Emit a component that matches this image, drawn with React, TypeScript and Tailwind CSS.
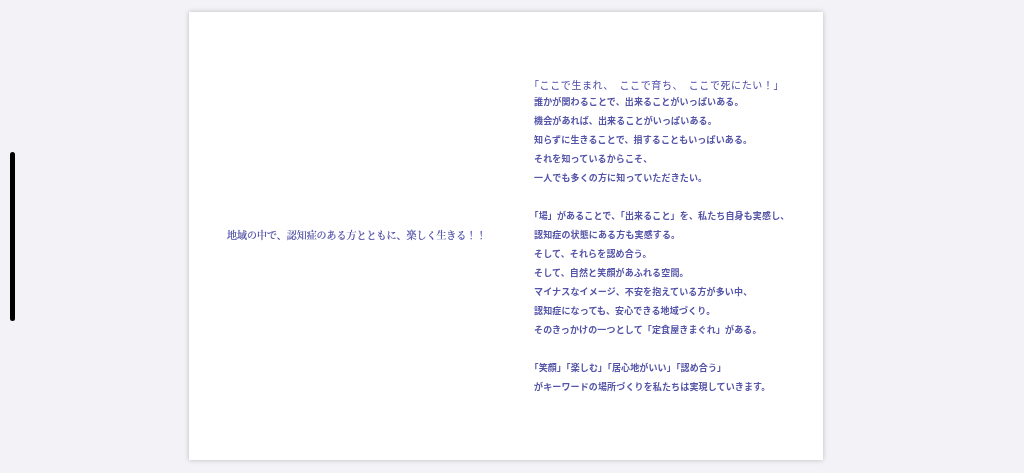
const firstBlock = [
  "誰かが関わることで、出来ることがいっぱいある。",
  "機会があれば、出来ることがいっぱいある。",
  "知らずに生きることで、損することもいっぱいある。",
  "それを知っているからこそ、",
  "一人でも多くの方に知っていただきたい。",
];

const secondBlock = [
  "「場」があることで、「出来ること」を、私たち自身も実感し、",
  "認知症の状態にある方も実感する。",
  "そして、それらを認め合う。",
  "そして、自然と笑顔があふれる空間。",
  "マイナスなイメージ、不安を抱えている方が多い中、",
  "認知症になっても、安心できる地域づくり。",
  "そのきっかけの一つとして「定食屋きまぐれ」がある。",
];

const thirdBlock = [
  "「笑顔」「楽しむ」「居心地がいい」「認め合う」",
  "がキーワードの場所づくりを私たちは実現していきます。",
];

function Lines({ lines }: { lines: string[] }) {
  return (
    <div>
      {lines.map((line) => (
        <p key={line} className="h-[19px] leading-[19px] whitespace-nowrap">
          {line}
        </p>
      ))}
    </div>
  );
}

export default function App() {
  return (
    <div className="relative h-[473px] w-[1024px] overflow-hidden bg-[#f2f2f7] pt-3 pl-[189px] font-['Noto_Sans_CJK_JP',sans-serif]">
      {/* scroll handle */}
      <div className="absolute top-[152px] left-[10px] h-[169px] w-[5px] rounded-full bg-black" />

      {/* book spread */}
      <div className="flex h-[448px] w-[634px] items-center bg-white shadow-[0_0_5px_rgba(0,0,0,0.22)]">
        <div className="w-[345px] pb-[3px] pl-[38px]">
          <p className="whitespace-nowrap font-['Noto_Serif_CJK_JP','Liberation_Serif','Noto_Sans_CJK_JP',serif] text-[10px] font-medium tracking-[-0.02px] text-[#4c4ca4] blur-[0.25px] [-webkit-text-stroke:0.15px_#4c4ca4]">
            地域の中で、認知症のある方とともに、楽しく生きる！！
          </p>
        </div>

        <div className="flex flex-col pb-[2px] text-[9px] font-bold tracking-[0.14px] text-[#5454a8] blur-[0.25px] [text-spacing-trim:trim-start]">
          <p className="h-[17px] whitespace-nowrap text-[10px] leading-[19px] font-normal tracking-[0.6px] text-[#4a4aa8]">
            「ここで生まれ、　ここで育ち、　ここで死にたい！」
          </p>
          <Lines lines={firstBlock} />
          <div className="h-[19px]" />
          <Lines lines={secondBlock} />
          <div className="h-[19px]" />
          <Lines lines={thirdBlock} />
        </div>
      </div>
    </div>
  );
}
